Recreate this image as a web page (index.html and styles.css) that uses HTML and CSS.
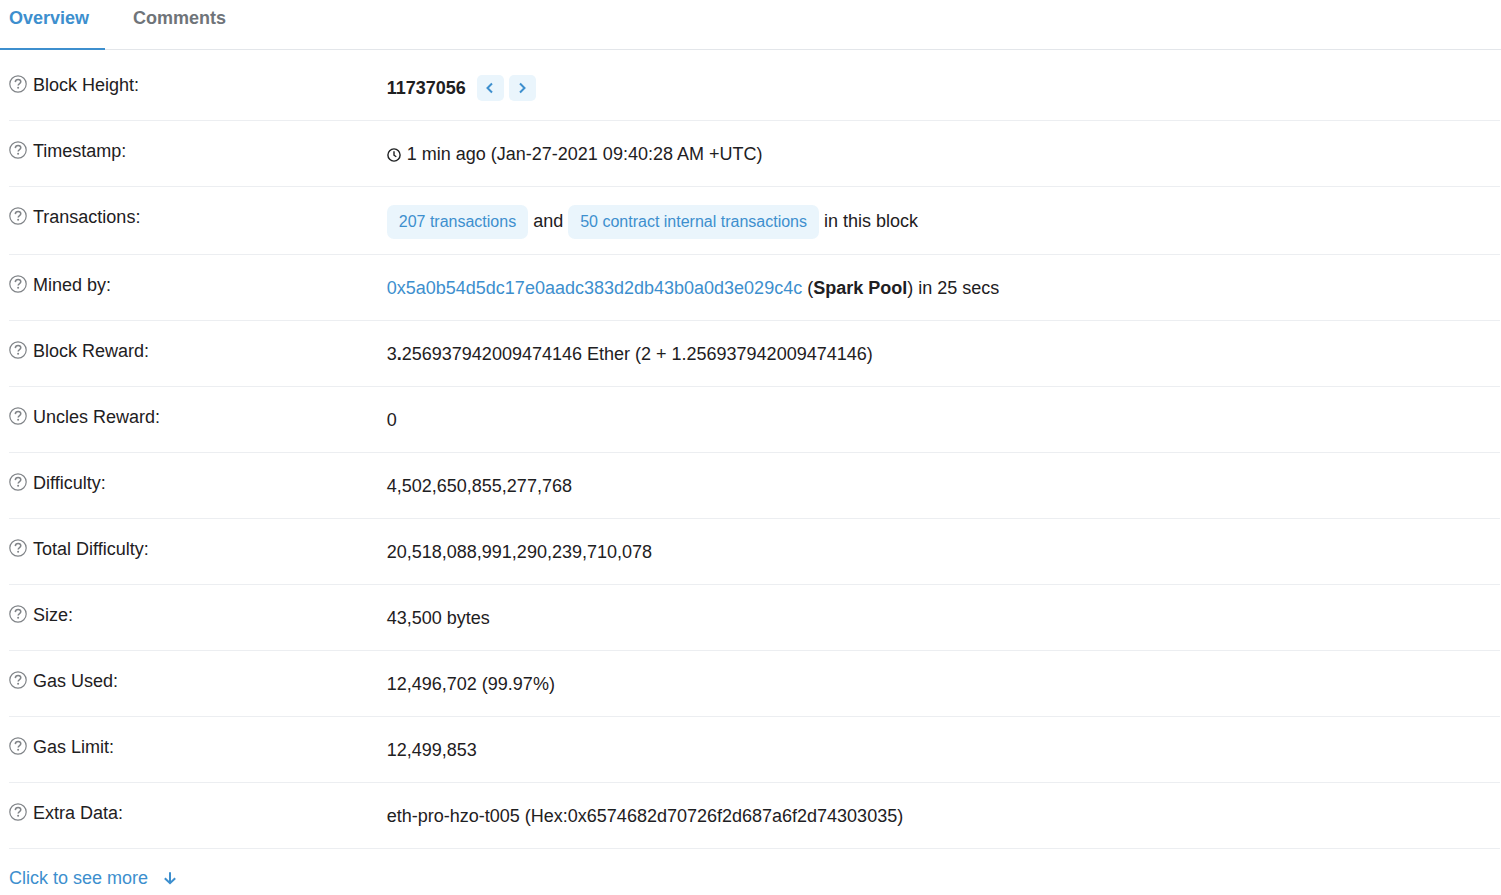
FILE: index.html
```html
<!DOCTYPE html>
<html lang="en">
<head>
    <meta charset="UTF-8">
    <meta name="viewport" content="width=device-width, initial-scale=1.0">
    <title>Block 11737056</title>
    <link rel="stylesheet" href="styles.css">
</head>
<body>

    <!-- Shared icons -->
    <svg class="sprite" aria-hidden="true">
        <symbol id="icon-help" viewBox="0 0 18 18">
            <circle cx="9" cy="9" r="8.2" fill="none" stroke="currentColor" stroke-width="1.2"/>
            <path d="M6.3 7.1c.1-1.6 1.2-2.6 2.8-2.6s2.7.9 2.7 2.3c0 1.8-2.6 1.7-2.6 3.6" fill="none" stroke="currentColor" stroke-width="1.5"/>
            <circle cx="9.1" cy="12.7" r="1" fill="currentColor"/>
        </symbol>
    </svg>

    <header class="tabs" role="tablist">
        <button type="button" class="tab active" role="tab" aria-selected="true">Overview</button>
        <button type="button" class="tab" role="tab" aria-selected="false">Comments</button>
    </header>

    <main>
        <dl class="details">
            <div class="row">
                <dt><svg class="help"><use href="#icon-help"/></svg>Block Height:</dt>
                <dd class="height">
                    <strong>11737056</strong>
                    <button type="button" class="step" aria-label="Previous block">
                        <svg viewBox="0 0 10 12"><path d="M7 1.5 2.5 6 7 10.5"/></svg>
                    </button>
                    <button type="button" class="step" aria-label="Next block">
                        <svg viewBox="0 0 10 12"><path d="M3 1.5 7.5 6 3 10.5"/></svg>
                    </button>
                </dd>
            </div>
            <div class="row">
                <dt><svg class="help"><use href="#icon-help"/></svg>Timestamp:</dt>
                <dd><svg class="clock" viewBox="0 0 14 14"><circle cx="7" cy="7" r="6.1"/><path d="M7 3.2V7.2L9.3 8.8"/></svg>1 min ago (Jan-27-2021 09:40:28 AM +UTC)</dd>
            </div>
            <div class="row">
                <dt><svg class="help"><use href="#icon-help"/></svg>Transactions:</dt>
                <dd class="pills"><a class="pill" href="#">207 transactions</a> and <a class="pill" href="#">50 contract internal transactions</a> in this block</dd>
            </div>
            <div class="row">
                <dt><svg class="help"><use href="#icon-help"/></svg>Mined by:</dt>
                <dd><a href="#">0x5a0b54d5dc17e0aadc383d2db43b0a0d3e029c4c</a> (<strong>Spark Pool</strong>) in 25 secs</dd>
            </div>
            <div class="row">
                <dt><svg class="help"><use href="#icon-help"/></svg>Block Reward:</dt>
                <dd>3<b>.</b>256937942009474146 Ether (2 + 1.256937942009474146)</dd>
            </div>
            <div class="row">
                <dt><svg class="help"><use href="#icon-help"/></svg>Uncles Reward:</dt>
                <dd>0</dd>
            </div>
            <div class="row">
                <dt><svg class="help"><use href="#icon-help"/></svg>Difficulty:</dt>
                <dd>4,502,650,855,277,768</dd>
            </div>
            <div class="row">
                <dt><svg class="help"><use href="#icon-help"/></svg>Total Difficulty:</dt>
                <dd>20,518,088,991,290,239,710,078</dd>
            </div>
            <div class="row">
                <dt><svg class="help"><use href="#icon-help"/></svg>Size:</dt>
                <dd>43,500 bytes</dd>
            </div>
            <div class="row">
                <dt><svg class="help"><use href="#icon-help"/></svg>Gas Used:</dt>
                <dd>12,496,702 (99.97%)</dd>
            </div>
            <div class="row">
                <dt><svg class="help"><use href="#icon-help"/></svg>Gas Limit:</dt>
                <dd>12,499,853</dd>
            </div>
            <div class="row">
                <dt><svg class="help"><use href="#icon-help"/></svg>Extra Data:</dt>
                <dd>eth-pro-hzo-t005 (Hex:0x6574682d70726f2d687a6f2d74303035)</dd>
            </div>
        </dl>
        <a class="more" href="#">Click to see more
            <svg viewBox="0 0 14 14"><path d="M7 1.2V12M1.8 7.2 7 12.2 12.2 7.2"/></svg>
        </a>
    </main>

</body>
</html>
```
FILE: styles.css
```css
* {
    box-sizing: border-box;
}
body {
    font-family: "Liberation Sans", Arial, sans-serif;
    font-size: 18px;
    line-height: 27px;
    margin: 0;
    background-color: #fff;
    color: #1e2022;
}
a {
    color: #3d8fce;
    text-decoration: none;
}
button {
    border: none;
    font: inherit;
    cursor: pointer;
}
.sprite {
    display: none;
}

/* Tabs */
.tabs {
    display: flex;
    border-bottom: 1px solid #e3e6ea;
}
.tab {
    margin-bottom: -1px;
    padding: 5px 16px 16px 28px;
    background: none;
    border-bottom: 2px solid transparent;
    color: #6f7479;
    font-weight: bold;
}
.tab:first-child {
    padding-left: 9px;
}
.tab.active {
    border-color: #3d8fce;
    color: #3d8fce;
}

/* Block details */
main {
    padding: 5px 1px 0 9px;
}
.details {
    margin: 0;
}
.row {
    display: flex;
    padding: 16px 0 14px;
    border-bottom: 1px solid #eceef1;
}
.row dt {
    display: flex;
    flex: 0 0 25%;
    line-height: 29px;
}
.row dd {
    flex: 1;
    margin: 0;
    padding-left: 5px;
    line-height: 35px;
}
.help {
    width: 18px;
    height: 18px;
    margin: 4px 6px 0 0;
    color: #808488;
}
.height {
    display: flex;
}
.height strong {
    margin-right: 11px;
}
.step {
    display: flex;
    align-items: center;
    justify-content: center;
    width: 27px;
    height: 26px;
    margin: 4px 5px 0 0;
    padding: 0;
    border-radius: 5px;
    background-color: #eaf5fc;
    color: #3d8fce;
}
.step svg {
    width: 10px;
    height: 12px;
    fill: none;
    stroke: currentColor;
    stroke-width: 2;
}
.clock {
    width: 14px;
    height: 14px;
    margin-right: 6px;
    vertical-align: -2px;
    fill: none;
    stroke: currentColor;
    stroke-width: 1.4;
}
.row .pills {
    padding-bottom: 1px;
    line-height: 36px;
}
.pill {
    display: inline-block;
    padding: 0 12px;
    border-radius: 7px;
    background-color: #eaf5fc;
    font-size: 16px;
    line-height: 34px;
    vertical-align: middle;
}
.more {
    display: inline-flex;
    align-items: center;
    gap: 15px;
    padding: 16px 0 4px;
}
.more svg {
    width: 14px;
    height: 14px;
    margin-bottom: 2px;
    fill: none;
    stroke: currentColor;
    stroke-width: 2;
}
```
